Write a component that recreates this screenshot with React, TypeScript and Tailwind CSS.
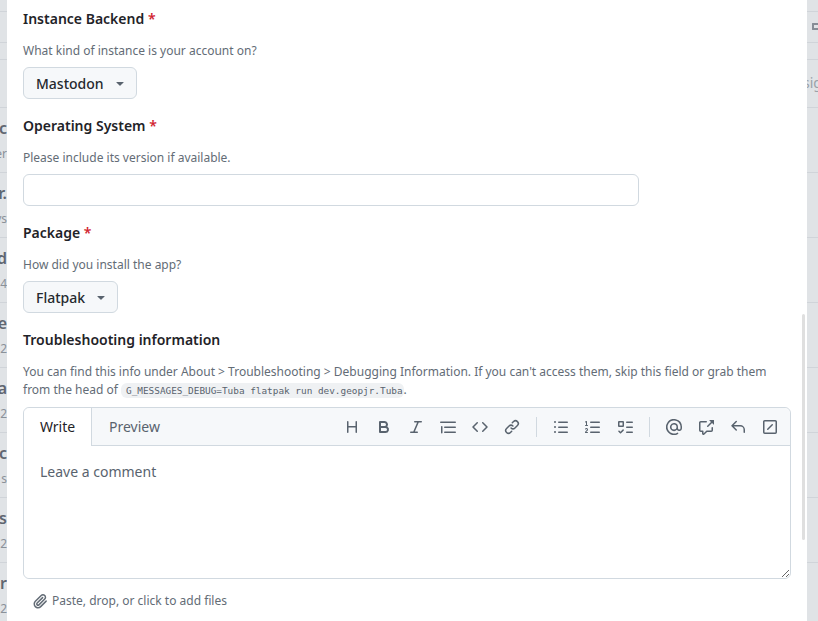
import React from "react";

const OCTICONS: Record<string, string> = {
  heading:
    "M3.75 2a.75.75 0 0 1 .75.75V7h7V2.75a.75.75 0 0 1 1.5 0v10.5a.75.75 0 0 1-1.5 0V8.5h-7v4.75a.75.75 0 0 1-1.5 0V2.75A.75.75 0 0 1 3.75 2Z",
  bold: "M4 2h4.5a3.501 3.501 0 0 1 2.852 5.53A3.499 3.499 0 0 1 9.5 14H4a1 1 0 0 1-1-1V3a1 1 0 0 1 1-1Zm1 7v3h4.5a1.5 1.5 0 0 0 0-3Zm3.5-2a1.5 1.5 0 0 0 0-3H5v3Z",
  italic:
    "M6 2.75A.75.75 0 0 1 6.75 2h6.5a.75.75 0 0 1 0 1.5h-2.505l-3.858 9H9.25a.75.75 0 0 1 0 1.5h-6.5a.75.75 0 0 1 0-1.5h2.505l3.858-9H6.75A.75.75 0 0 1 6 2.75Z",
  quote:
    "M.75 2.5h14.5a.75.75 0 0 1 0 1.5H.75a.75.75 0 0 1 0-1.5Zm4 5h10.5a.75.75 0 0 1 0 1.5H4.75a.75.75 0 0 1 0-1.5Zm0 5h10.5a.75.75 0 0 1 0 1.5H4.75a.75.75 0 0 1 0-1.5ZM2.5 7.75v6a.75.75 0 0 1-1.5 0v-6a.75.75 0 0 1 1.5 0Z",
  code: "m11.28 3.22 4.25 4.25a.75.75 0 0 1 0 1.06l-4.25 4.25a.749.749 0 0 1-1.275-.326.749.749 0 0 1 .215-.734L13.94 8l-3.72-3.72a.749.749 0 0 1 .326-1.275.749.749 0 0 1 .734.215Zm-6.56 0a.751.751 0 0 1 1.042.018.751.751 0 0 1 .018 1.042L2.06 8l3.72 3.72a.749.749 0 0 1-.326 1.275.749.749 0 0 1-.734-.215L.47 8.53a.75.75 0 0 1 0-1.06Z",
  link: "m7.775 3.275 1.25-1.25a3.5 3.5 0 1 1 4.95 4.95l-2.5 2.5a3.5 3.5 0 0 1-4.95 0 .751.751 0 0 1 .018-1.042.751.751 0 0 1 1.042-.018 1.998 1.998 0 0 0 2.83 0l2.5-2.5a2.002 2.002 0 0 0-2.83-2.83l-1.25 1.25a.751.751 0 0 1-1.042-.018.751.751 0 0 1-.018-1.042Zm-4.69 9.64a1.998 1.998 0 0 0 2.83 0l1.25-1.25a.751.751 0 0 1 1.042.018.751.751 0 0 1 .018 1.042l-1.25 1.25a3.5 3.5 0 1 1-4.95-4.95l2.5-2.5a3.5 3.5 0 0 1 4.95 0 .751.751 0 0 1-.018 1.042.751.751 0 0 1-1.042.018 1.998 1.998 0 0 0-2.83 0l-2.5 2.5a1.998 1.998 0 0 0 0 2.83Z",
  ul: "M5.75 2.5h8.5a.75.75 0 0 1 0 1.5h-8.5a.75.75 0 0 1 0-1.5Zm0 5h8.5a.75.75 0 0 1 0 1.5h-8.5a.75.75 0 0 1 0-1.5Zm0 5h8.5a.75.75 0 0 1 0 1.5h-8.5a.75.75 0 0 1 0-1.5ZM2 14a1 1 0 1 1 0-2 1 1 0 0 1 0 2Zm1-6a1 1 0 1 1-2 0 1 1 0 0 1 2 0ZM2 4a1 1 0 1 1 0-2 1 1 0 0 1 0 2Z",
  ol: "M5 3.25a.75.75 0 0 1 .75-.75h8.5a.75.75 0 0 1 0 1.5h-8.5A.75.75 0 0 1 5 3.25Zm0 5a.75.75 0 0 1 .75-.75h8.5a.75.75 0 0 1 0 1.5h-8.5A.75.75 0 0 1 5 8.25Zm0 5a.75.75 0 0 1 .75-.75h8.5a.75.75 0 0 1 0 1.5h-8.5a.75.75 0 0 1-.75-.75ZM.924 10.32a.5.5 0 0 1-.851-.525l.001-.001.001-.002.002-.004.007-.011c.097-.144.215-.273.348-.384.228-.19.588-.392 1.068-.392.468 0 .858.181 1.126.484.259.294.377.673.377 1.038 0 .987-.686 1.495-1.156 1.845l-.047.035c-.303.225-.522.4-.654.597h1.357a.5.5 0 0 1 0 1H.5a.5.5 0 0 1-.5-.5c0-1.005.692-1.52 1.167-1.875l.035-.025c.531-.396.8-.625.8-1.078a.57.57 0 0 0-.128-.376C1.806 10.068 1.695 10 1.5 10a.658.658 0 0 0-.429.163.835.835 0 0 0-.144.153ZM2.003 2.5V6h.503a.5.5 0 0 1 0 1H.5a.5.5 0 0 1 0-1h.503V3.308l-.28.14a.5.5 0 0 1-.446-.895l1.003-.5a.5.5 0 0 1 .723.447Z",
  tasklist:
    "M2 2h4a1 1 0 0 1 1 1v4a1 1 0 0 1-1 1H2a1 1 0 0 1-1-1V3a1 1 0 0 1 1-1Zm4.655 8.595a.75.75 0 0 1 0 1.06L4.03 14.28a.75.75 0 0 1-1.06 0l-1.5-1.5a.749.749 0 0 1 .326-1.275.749.749 0 0 1 .734.215l.97.97 2.095-2.095a.75.75 0 0 1 1.06 0ZM9.75 2.5h5.5a.75.75 0 0 1 0 1.5h-5.5a.75.75 0 0 1 0-1.5Zm0 5h5.5a.75.75 0 0 1 0 1.5h-5.5a.75.75 0 0 1 0-1.5Zm0 5h5.5a.75.75 0 0 1 0 1.5h-5.5a.75.75 0 0 1 0-1.5Zm-7.25-9v3h3v-3Z",
  mention:
    "M4.75 2.37a6.501 6.501 0 0 0 6.5 11.26.75.75 0 0 1 .75 1.298A7.999 7.999 0 0 1 .989 4.148 8 8 0 0 1 16 7.75v1.5a2.75 2.75 0 0 1-5.072 1.475 3.999 3.999 0 0 1-6.65-4.19A4 4 0 0 1 12 8v1.25a1.25 1.25 0 0 0 2.5 0V7.867a6.5 6.5 0 0 0-9.75-5.496ZM10.5 8a2.5 2.5 0 1 0-5 0 2.5 2.5 0 0 0 5 0Z",
  crossref:
    "M2.75 3.5a.25.25 0 0 0-.25.25v7.5c0 .138.112.25.25.25h2a.75.75 0 0 1 .75.75v2.19l2.72-2.72a.749.749 0 0 1 .53-.22h4.5a.25.25 0 0 0 .25-.25v-2.5a.75.75 0 0 1 1.5 0v2.5A1.75 1.75 0 0 1 13.25 13H9.06l-2.573 2.573A1.458 1.458 0 0 1 4 14.543V13H2.75A1.75 1.75 0 0 1 1 11.25v-7.5C1 2.784 1.784 2 2.75 2h5.5a.75.75 0 0 1 0 1.5ZM16 1.25v4.146a.25.25 0 0 1-.427.177L14.03 4.03l-3.75 3.75a.749.749 0 0 1-1.275-.326.749.749 0 0 1 .215-.734l3.75-3.75-1.543-1.543A.25.25 0 0 1 11.604 1h4.146a.25.25 0 0 1 .25.25Z",
  reply:
    "M6.78 1.97a.75.75 0 0 1 0 1.06L3.81 6h6.44A4.75 4.75 0 0 1 15 10.75v2.5a.75.75 0 0 1-1.5 0v-2.5a3.25 3.25 0 0 0-3.25-3.25H3.81l2.97 2.97a.749.749 0 0 1-.326 1.275.749.749 0 0 1-.734-.215L1.47 7.28a.75.75 0 0 1 0-1.06l4.25-4.25a.75.75 0 0 1 1.06 0Z",
  slash:
    "M2.75 1h10.5c.966 0 1.75.784 1.75 1.75v10.5A1.75 1.75 0 0 1 13.25 15H2.75A1.75 1.75 0 0 1 1 13.25V2.75C1 1.784 1.784 1 2.75 1Zm0 1.5a.25.25 0 0 0-.25.25v10.5c0 .138.112.25.25.25h10.5a.25.25 0 0 0 .25-.25V2.75a.25.25 0 0 0-.25-.25Zm8.03 2.72a.75.75 0 0 1 0 1.06l-4.5 4.5a.75.75 0 0 1-1.06-1.06l4.5-4.5a.75.75 0 0 1 1.06 0Z",
  paperclip:
    "M12.212 3.02a1.753 1.753 0 0 0-2.478.003l-5.83 5.83a3.007 3.007 0 0 0-.88 2.127c0 .795.315 1.551.88 2.116.567.567 1.333.89 2.126.89.79 0 1.548-.321 2.116-.89l5.48-5.48a.75.75 0 0 1 1.061 1.06l-5.48 5.48a4.492 4.492 0 0 1-3.177 1.33c-1.2 0-2.345-.487-3.187-1.33a4.483 4.483 0 0 1-1.32-3.177c0-1.195.475-2.341 1.32-3.186l5.83-5.83a3.25 3.25 0 0 1 5.553 2.297c0 .863-.343 1.691-.953 2.301L7.439 12.39c-.375.377-.884.59-1.416.593a1.998 1.998 0 0 1-1.412-.593 1.992 1.992 0 0 1 0-2.828l5.48-5.48a.751.751 0 0 1 1.042.018.751.751 0 0 1 .018 1.042l-5.48 5.48a.492.492 0 0 0 0 .707.499.499 0 0 0 .352.154.51.51 0 0 0 .356-.154l5.833-5.827a1.755 1.755 0 0 0 0-2.481Z",
  triangle:
    "m4.427 7.427 3.396 3.396a.25.25 0 0 0 .354 0l3.396-3.396A.25.25 0 0 0 11.396 7H4.604a.25.25 0 0 0-.177.427Z",
};

const Octicon = ({ name }: { name: string }) => (
  <svg
    width="16"
    height="16"
    viewBox="0 0 16 16"
    fill="currentColor"
    className="shrink-0"
  >
    <path d={OCTICONS[name]} />
  </svg>
);

const TOOLBAR = [
  ["heading", "bold", "italic", "quote", "code", "link"],
  ["ul", "ol", "tasklist"],
  ["mention", "crossref", "reply", "slash"],
];

const LEFT_ROWS = [
  { title: "c", meta: "er" },
  { title: "r.", meta: "ys" },
  { title: "d", meta: "4" },
  { title: "e", meta: "2" },
  { title: "a", meta: "2" },
  { title: "c", meta: "s" },
  { title: "s", meta: "2" },
  { title: "r", meta: "2" },
];

const Label = ({ text, required }: { text: string; required?: boolean }) => (
  <div className="text-sm leading-[21px] font-semibold text-[#1f2328]">
    {text}
    {required && <span className="text-[#d1242f]"> *</span>}
  </div>
);

const Hint = ({ children }: { children: React.ReactNode }) => (
  <div className="mt-[13px] text-xs leading-[18px] text-[#636c76]">
    {children}
  </div>
);

const Dropdown = ({ label }: { label: string }) => (
  <button className="mt-[7px] flex h-8 items-center gap-2 rounded-md border border-[#d1d9e0] bg-[#f6f8fa] pl-3 pr-2 text-sm font-medium text-[#25292e]">
    <span className="pt-[2px]">{label}</span>
    <span className="text-[#59636e]">
      <Octicon name="triangle" />
    </span>
  </button>
);

const TopRows = ({ icon, sig }: { icon?: boolean; sig?: boolean }) => (
  <>
    <div className="h-[12px] shrink-0 border-b border-[#d0d4d9]" />
    <div className="flex h-[31px] shrink-0 items-center border-b border-[#d0d4d9] pb-[2px] pl-[5px]">
      {icon && (
        <div className="h-[7px] w-2 shrink-0 rounded-[1px] border-2 border-r-0 border-[#868d96]" />
      )}
    </div>
    <div className="h-[17px] shrink-0 border-b border-[#d0d4d9]" />
    <div className="h-[48px] shrink-0 border-b border-[#d0d4d9] pt-[13px] text-sm leading-5 text-[#9aa0a8]">
      {sig && <div className="-ml-1 whitespace-nowrap">sig</div>}
    </div>
  </>
);

const LeftStrip = () => (
  <div className="flex h-full w-[7px] shrink-0 flex-col overflow-hidden bg-[#e0e3e6]">
    <TopRows />
    {LEFT_ROWS.map((row, i) => (
      <div
        key={i}
        className="flex h-[65px] shrink-0 flex-col items-end border-b border-[#d0d4d9] pt-[8px]"
      >
        <div className="text-base leading-6 font-semibold whitespace-nowrap text-[#5f6670]">
          {row.title}
        </div>
        <div className="mt-[6px] text-xs leading-4 whitespace-nowrap text-[#8a9199]">
          {row.meta}
        </div>
      </div>
    ))}
  </div>
);

const RightStrip = () => (
  <div className="flex h-full flex-1 flex-col overflow-hidden bg-[#e0e3e6]">
    <TopRows icon sig />
    {LEFT_ROWS.map((_, i) => (
      <div key={i} className="h-[65px] shrink-0 border-b border-[#d0d4d9]" />
    ))}
  </div>
);

export default function App() {
  return (
    <div
      className="flex h-[621px] w-[818px] overflow-hidden bg-white"
      style={{ fontFamily: '"Noto Sans", sans-serif' }}
    >
      <LeftStrip />

      <div className="relative h-full w-[800px] shrink-0 overflow-hidden bg-white px-4 pt-[8px]">
        <Label text="Instance Backend" required />
        <Hint>What kind of instance is your account on?</Hint>
        <Dropdown label="Mastodon" />

        <div className="mt-4">
          <Label text="Operating System" required />
          <Hint>Please include its version if available.</Hint>
          <input className="mt-[7px] block h-8 w-[616px] rounded-md border border-[#d1d9e0] bg-white px-3 text-sm" />
        </div>

        <div className="mt-4">
          <Label text="Package" required />
          <Hint>How did you install the app?</Hint>
          <Dropdown label="Flatpak" />
        </div>

        <div className="mt-4">
          <Label text="Troubleshooting information" />
          <Hint>
            You can find this info under About &gt; Troubleshooting &gt;
            Debugging Information. If you can't access them, skip this field or
            grab them
            <br />
            from the head of{" "}
            <code
              className="rounded-md bg-[#eff1f3] py-[2px] pl-[5px] pr-[1px] text-[9.4px] text-[#59636e]"
              style={{ fontFamily: '"DejaVu Sans Mono", monospace' }}
            >
              G_MESSAGES_DEBUG=Tuba flatpak run dev.geopjr.Tuba
            </code>
            .
          </Hint>
        </div>

        <div className="mt-[7px] w-[768px] rounded-md border border-[#d1d9e0]">
          <div className="flex h-[38px] items-stretch rounded-t-md border-b border-[#d1d9e0] bg-[#f6f8fa]">
            <div className="-mb-px flex w-[68px] items-center justify-center rounded-tl-md border-r border-[#d1d9e0] bg-white text-sm text-[#1f2328]">
              Write
            </div>
            <div className="flex items-center px-[17px] text-sm text-[#59636e]">
              Preview
            </div>
            <div className="ml-auto flex items-center pr-[4px]">
              {TOOLBAR.map((group, g) => (
                <React.Fragment key={g}>
                  {g > 0 && <div className="mx-2 h-5 w-px bg-[#d1d9e0]" />}
                  <div className="flex">
                    {group.map((name) => (
                      <div
                        key={name}
                        className="flex h-8 w-8 items-center justify-center text-[#59636e]"
                      >
                        <Octicon name={name} />
                      </div>
                    ))}
                  </div>
                </React.Fragment>
              ))}
            </div>
          </div>
          <textarea
            placeholder="Leave a comment"
            className="block h-[132px] w-full resize-y rounded-b-md bg-white p-4 text-sm leading-5 outline-none placeholder:text-[#59636e]"
          />
        </div>

        <div className="mt-[13px] flex items-center gap-1 pl-[9px] text-xs leading-[18px] text-[#636c76]">
          <Octicon name="paperclip" />
          Paste, drop, or click to add files
        </div>

        <div className="absolute top-[314px] right-[2px] h-[226px] w-[3px] rounded-full bg-[#dfdfdf]" />
      </div>

      <RightStrip />
    </div>
  );
}
